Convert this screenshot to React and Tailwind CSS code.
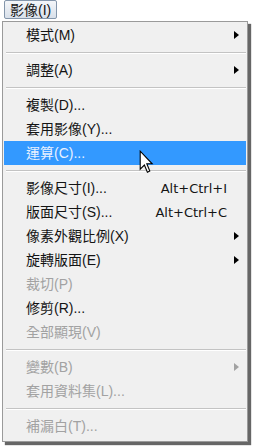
import React from 'react';

const items = [
  { label: '模式(M)', arrow: true },
  'sep',
  { label: '調整(A)', arrow: true },
  'sep',
  { label: '複製(D)...' },
  { label: '套用影像(Y)...' },
  { label: '運算(C)...', active: true },
  'sep',
  { label: '影像尺寸(I)...', shortcut: 'Alt+Ctrl+I' },
  { label: '版面尺寸(S)...', shortcut: 'Alt+Ctrl+C' },
  { label: '像素外觀比例(X)', arrow: true },
  { label: '旋轉版面(E)', arrow: true },
  { label: '裁切(P)', disabled: true },
  { label: '修剪(R)...' },
  { label: '全部顯現(V)', disabled: true },
  'sep',
  { label: '變數(B)', arrow: true, disabled: true },
  { label: '套用資料集(L)...', disabled: true },
  'sep',
  { label: '補漏白(T)...', disabled: true },
];

function Cursor() {
  return (
    <svg width="15" height="24" viewBox="0 0 12.5 20" className="absolute left-[136px] top-[128px]">
      <path d="M1 1 L1 16 L4.5 12.5 L7 18.5 L9 17.5 L6.5 11.5 L11 11.5 Z" fill="#ffffff" stroke="#000000" strokeWidth="0.9" strokeLinejoin="miter" />
    </svg>
  );
}

function App() {
  return (
    <div
      className="w-[254px] h-[448px] bg-white overflow-hidden text-[14px] leading-none"
      style={{ fontFamily: '"Liberation Sans", "Noto Sans CJK TC", sans-serif' }}
    >
      {/* menu bar */}
      <div className="h-[21px] pl-[4px]">
        <div className="h-[19px] w-[53px] flex items-center pl-[5px] border border-[#8496ab] rounded-[2px] bg-gradient-to-b from-[#f4f6f9] to-[#d8e0ea] text-[#141414]">
          影像(I)
        </div>
      </div>

      {/* dropdown */}
      <div className="relative ml-[2px] w-[246px] border border-[#9a9a9a] bg-[#f0f0f0] pt-[1px] pb-[3px] shadow-[3px_3px_1px_rgba(0,0,0,0.6)]">
        {items.map((it, i) => {
          if (it === 'sep') {
            return (
              <div key={i} className="h-[11px] flex items-center pl-[3px] pr-[1px]">
                <div className="w-full border-t border-[#c3c3c3] border-b border-b-white" />
              </div>
            );
          }
          const color = it.active
            ? 'text-[#e8f1ff]'
            : it.disabled
            ? 'text-[#a2a2a2]'
            : 'text-[#141414]';
          return (
            <div
              key={i}
              className={`mx-[1px] h-[24px] flex items-center pl-[22px] ${color} ${it.active ? 'bg-[#3399ff]' : ''}`}
            >
              <span className="flex-1 whitespace-nowrap">{it.label}</span>
              {it.shortcut && (
                <span className="whitespace-nowrap text-[13px]" style={{ fontFamily: '"DejaVu Sans", sans-serif' }}>
                  {it.shortcut}
                </span>
              )}
              <span className="w-[19px] h-full flex items-center pl-[7px]">
                {it.arrow && (
                  <span
                    className={`w-0 h-0 border-y-[4px] border-y-transparent border-l-[5px] ${it.disabled ? 'border-l-[#a2a2a2]' : 'border-l-black'}`}
                  />
                )}
              </span>
            </div>
          );
        })}
        <Cursor />
      </div>
    </div>
  );
}

export default App;
